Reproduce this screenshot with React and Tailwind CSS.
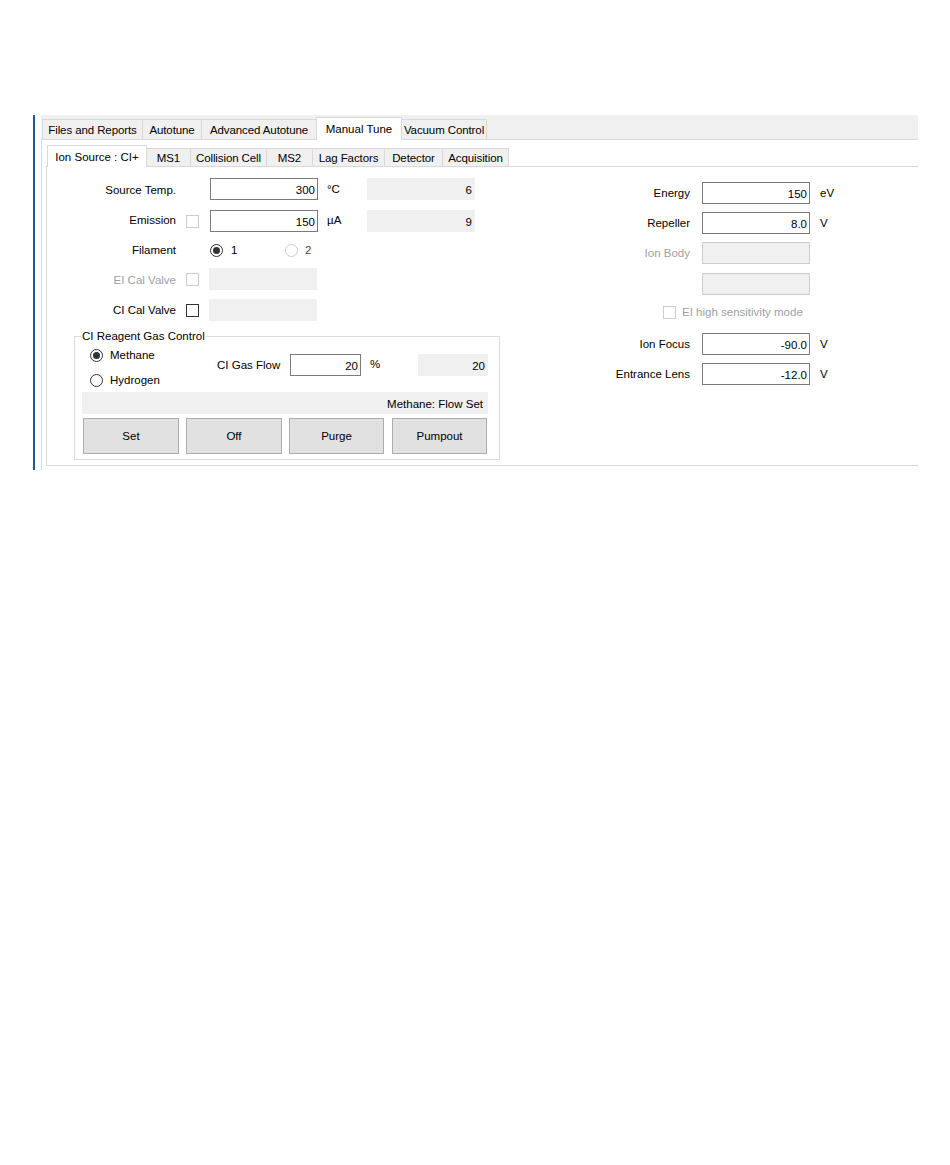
import React from 'react';

const outerTabs = [
  { label: 'Files and Reports', w: 'w-[100px]' },
  { label: 'Autotune', w: 'w-[59px]' },
  { label: 'Advanced Autotune', w: 'w-[115px]' },
  { label: 'Manual Tune', w: 'w-[86px]', active: true },
  { label: 'Vacuum Control', w: 'w-[85px]' },
];

const innerTabs = [
  { label: 'Ion Source : CI+', w: 'w-[100px]', active: true },
  { label: 'MS1', w: 'w-[43px]' },
  { label: 'Collision Cell', w: 'w-[76px]' },
  { label: 'MS2', w: 'w-[46px]' },
  { label: 'Lag Factors', w: 'w-[72px]' },
  { label: 'Detector', w: 'w-[58px]' },
  { label: 'Acquisition', w: 'w-[67px]' },
];

function TabRow({ tabs, tall }) {
  return (
    <>
      {tabs.map((t, i) => {
        const afterActive = i > 0 && tabs[i - 1].active;
        if (t.active) {
          return (
            <div
              key={t.label}
              className={`${t.w} ${tall ? 'h-[23px]' : 'h-[22px]'} -mb-px relative z-10 bg-white border border-b-0 border-[#d9d9d9] flex justify-center pt-[4px] leading-[14px]`}
            >
              {t.label}
            </div>
          );
        }
        return (
          <div
            key={t.label}
            className={`${t.w} ${tall ? 'h-[20px] pt-px' : 'h-[18px]'} bg-[#f0f0f0] border-t border-[#d9d9d9] ${afterActive ? '' : 'border-l'} ${i === tabs.length - 1 ? 'border-r' : ''} flex items-center justify-center leading-[14px] tracking-[-0.1px]`}
          >
            {t.label}
          </div>
        );
      })}
    </>
  );
}

function Check({ disabled }) {
  return (
    <span className={`block w-[13px] h-[13px] bg-white border ${disabled ? 'border-[#cccccc]' : 'border-[#333333]'}`} />
  );
}

function Radio({ checked, disabled }) {
  return (
    <span className={`flex items-center justify-center w-[13px] h-[13px] rounded-full bg-white border ${disabled ? 'border-[#cccccc]' : 'border-[#333333]'}`}>
      {checked && <span className="w-[7px] h-[7px] rounded-full bg-[#333333]" />}
    </span>
  );
}

function TextBox({ value, w = 'w-[108px]' }) {
  return (
    <div className={`${w} h-[22px] shrink-0 bg-white border border-[#7a7a7a] text-right pr-[2px] pt-px leading-[20px]`}>
      {value}
    </div>
  );
}

function ReadOut({ value, w = 'w-[108px]' }) {
  return (
    <div className={`${w} h-[22px] shrink-0 bg-[#f0f0f0] text-right pr-[3px] pt-px leading-[22px]`}>{value}</div>
  );
}

function Button({ children, w }) {
  return (
    <div className={`${w} h-[36px] bg-[#e1e1e1] border border-[#adadad] flex items-center justify-center pt-px`}>
      {children}
    </div>
  );
}

function LeftRow({ label, gray, slot, children, mt, lp = 'pt-[2px]' }) {
  return (
    <div className={`${mt} h-[22px] flex items-center`}>
      <span className={`w-[129px] text-right ${lp} ${gray ? 'text-[#a0a0a0]' : ''}`}>{label}</span>
      <span className="w-[34px] pl-[10px]">{slot}</span>
      {children}
    </div>
  );
}

function RightRow({ label, gray, children, mt }) {
  return (
    <div className={`${mt} h-[22px] flex items-center`}>
      <span className={`w-[90px] text-right pt-[2px] ${gray ? 'text-[#a0a0a0]' : ''}`}>{label}</span>
      <span className="ml-[12px] flex items-center">{children}</span>
    </div>
  );
}

export default function App() {
  return (
    <div className="w-[950px] h-[1165px] bg-white pt-[115px] pl-[33px] font-['Liberation_Sans',Arial,sans-serif] text-[11.5px] text-black">
      <div className="flex">
        {/* left accent bar */}
        <div className="w-[2px] h-[355px] bg-[#1b5a9c]" />

        {/* outer tab control */}
        <div className="ml-[6px] w-[877px]">
          <div className="h-[25px] bg-[#f0f0f0] border-b border-[#d9d9d9] flex items-end pl-px">
            <TabRow tabs={outerTabs} tall />
          </div>

          <div className="h-[330px] border-l border-[#d9d9d9] pt-[5px] pl-[4px]">
            {/* inner tab control */}
            <div className="h-[22px] border-b border-[#d9d9d9] flex items-end pl-px">
              <TabRow tabs={innerTabs} />
            </div>

            <div className="h-[299px] border-l border-b border-[#d9d9d9] flex">
              {/* left column */}
              <div className="w-[553px] flex flex-col">
                <LeftRow mt="mt-[11px]" label="Source Temp." lp="pt-[3px]">
                  <TextBox value="300" />
                  <span className="w-[49px] pl-[9px] pt-px">°C</span>
                  <ReadOut value="6" />
                </LeftRow>
                <LeftRow mt="mt-[10px]" label="Emission" lp="pt-0" slot={<Check disabled />}>
                  <TextBox value="150" />
                  <span className="w-[49px] pl-[9px]">µA</span>
                  <ReadOut value="9" />
                </LeftRow>
                <LeftRow mt="mt-[7px]" label="Filament" lp="pt-px">
                  <span className="w-[75px] flex items-center gap-[8px]">
                    <Radio checked />
                    <span className="pt-px">1</span>
                  </span>
                  <span className="flex items-center gap-[7px] text-[#444444]">
                    <Radio disabled />
                    <span className="pt-px">2</span>
                  </span>
                </LeftRow>
                <LeftRow mt="mt-[7px]" label="EI Cal Valve" lp="pt-[3px]" gray slot={<Check disabled />}>
                  <div className="-ml-px w-[108px] h-[22px] bg-[#f0f0f0]" />
                </LeftRow>
                <LeftRow mt="mt-[9px]" label="CI Cal Valve" slot={<Check />}>
                  <div className="-ml-px w-[108px] h-[22px] bg-[#f0f0f0]" />
                </LeftRow>

                <fieldset className="mt-[8px] ml-[27px] w-[426px] border border-[#dcdcdc] pl-[7px] pr-[11px] pb-[5px]">
                  <legend className="-ml-px px-px leading-[14px]">CI Reagent Gas Control</legend>
                  <div className="flex h-[49px]">
                    <div className="w-[135px] pl-[8px] flex flex-col">
                      <div className="h-[25px] flex items-center gap-[7px]">
                        <Radio checked />
                        <span>Methane</span>
                      </div>
                      <div className="h-[24px] flex items-center gap-[7px]">
                        <Radio />
                        <span className="pt-[2px]">Hydrogen</span>
                      </div>
                    </div>
                    <div className="mt-[11px] h-[22px] flex items-center">
                      <span className="w-[73px] pt-[2px]">CI Gas Flow</span>
                      <TextBox value="20" w="w-[71px]" />
                      <span className="w-[57px] pl-[9px]">%</span>
                      <ReadOut value="20" w="w-[70px]" />
                    </div>
                  </div>
                  <div className="h-[22px] bg-[#f0f0f0] text-right pr-[5px] pt-px leading-[22px]">Methane: Flow Set</div>
                  <div className="mt-[4px] ml-px flex">
                    <Button w="w-[96px]">Set</Button>
                    <span className="w-[7px]" />
                    <Button w="w-[96px]">Off</Button>
                    <span className="w-[7px]" />
                    <Button w="w-[95px]">Purge</Button>
                    <span className="w-[8px]" />
                    <Button w="w-[95px]">Pumpout</Button>
                  </div>
                </fieldset>
              </div>

              {/* right column */}
              <div className="flex flex-col">
                <RightRow mt="mt-[15px]" label="Energy">
                  <TextBox value="150" />
                  <span className="ml-[10px] pt-px">eV</span>
                </RightRow>
                <RightRow mt="mt-[8px]" label="Repeller">
                  <TextBox value="8.0" />
                  <span className="ml-[10px] pt-px">V</span>
                </RightRow>
                <RightRow mt="mt-[8px]" label="Ion Body" gray>
                  <div className="w-[108px] h-[22px] bg-[#f0f0f0] border border-[#cccccc]" />
                </RightRow>
                <RightRow mt="mt-[9px]" label="">
                  <div className="w-[108px] h-[22px] bg-[#f0f0f0] border border-[#cccccc]" />
                </RightRow>
                <div className="mt-[6px] h-[22px] flex items-center pl-[63px] gap-[6px] text-[#a0a0a0]">
                  <Check disabled />
                  <span className="pt-px">EI high sensitivity mode</span>
                </div>
                <RightRow mt="mt-[10px]" label="Ion Focus">
                  <TextBox value="-90.0" />
                  <span className="ml-[10px] pt-px">V</span>
                </RightRow>
                <RightRow mt="mt-[8px]" label="Entrance Lens">
                  <TextBox value="-12.0" />
                  <span className="ml-[10px] pt-px">V</span>
                </RightRow>
              </div>
            </div>
          </div>
        </div>
      </div>
    </div>
  );
}
